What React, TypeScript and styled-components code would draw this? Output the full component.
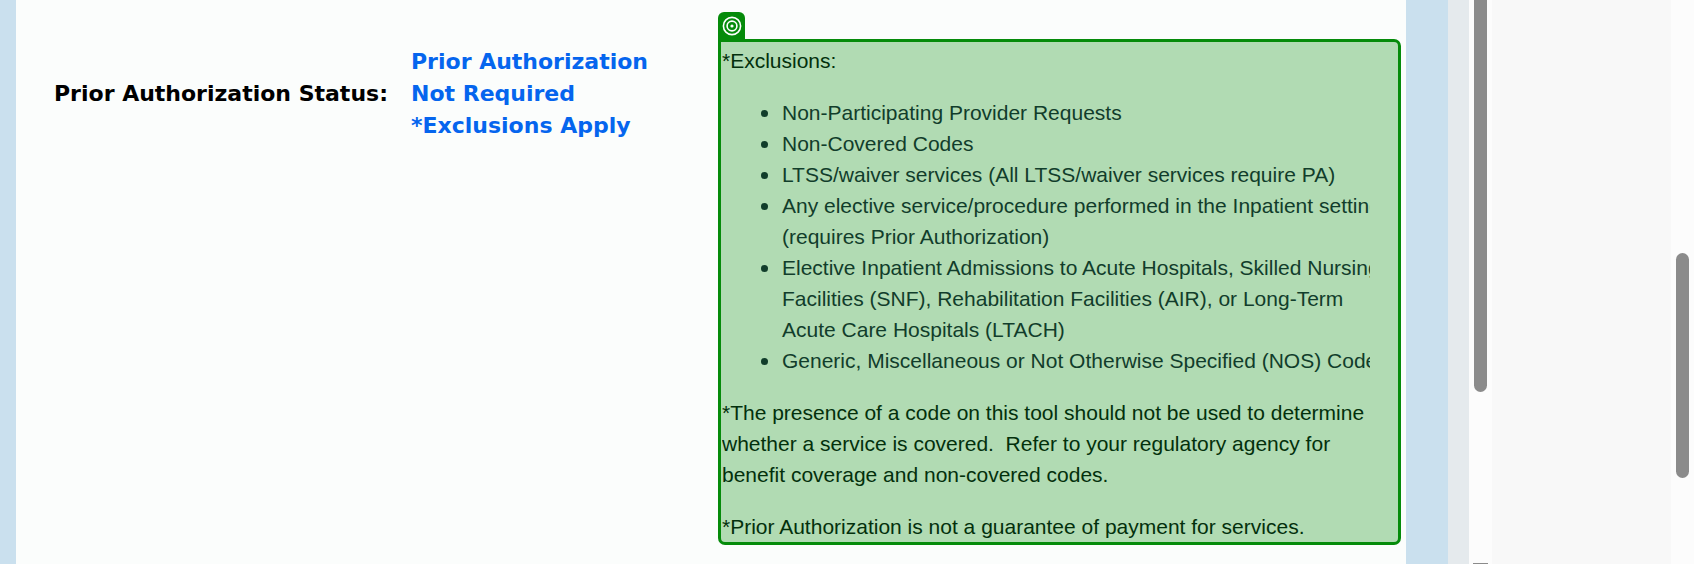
import React from "react";
import styled, { createGlobalStyle } from "styled-components";

const GlobalStyle = createGlobalStyle`
  * { box-sizing: border-box; }
  body {
    margin: 0;
    background: #f8f8f8;
    font-family: "Liberation Sans", Arial, sans-serif;
  }
`;

const Page = styled.div`
  display: flex;
  min-height: 100vh;
  overflow: hidden;
`;

const Frame = styled.main`
  flex: 1;
  min-width: 0;
  display: flex;
  background: #fbfdfc;
  border-left: 16px solid #cae0ee;
  border-right: 42px solid #cae0ee;
`;

const Gutter = styled.div`
  width: 21px;
  background: #e5eaed;
`;

const SidePanel = styled.aside`
  width: 179px;
  background: #f8f8f8;
`;

const Track = styled.div<{ $top: number }>`
  display: flex;
  flex-direction: column;
  align-items: center;
  justify-content: space-between;
  width: 23px;
  padding-top: ${(p) => p.$top}px;
  background: #fcfcfc;
`;

const Thumb = styled.div<{ $height: number; $flatTop?: boolean }>`
  width: 13px;
  height: ${(p) => p.$height}px;
  border-radius: ${(p) => (p.$flatTop ? "0 0 7px 7px" : "7px")};
  background: #8b8b8b;
`;

const ScrollArrow = styled.div`
  width: 15px;
  height: 1px;
  background: #8b8b8b;
`;

const Result = styled.section`
  flex: 1;
  min-width: 0;
  display: grid;
  grid-template-columns: 357fr 307fr 683fr;
  align-items: start;
  padding: 39px 5px 19px 38px;
`;

const StatusText = styled.div<{ $color: string }>`
  display: flex;
  align-items: center;
  height: 96px;
  margin-top: 7px;
  color: ${(p) => p.$color};
  font: bold 22px/32px Verdana, "DejaVu Sans", sans-serif;
  white-space: nowrap;
`;

const Highlight = styled.div`
  position: relative;
  min-width: 0;
  padding: 3px 28px 0 1px;
  border: 3px solid #058b0a;
  border-radius: 0 7px 7px 7px;
  background: #b1dbb3;
`;

const Badge = styled.span`
  position: absolute;
  left: -3px;
  bottom: 100%;
  display: flex;
  align-items: center;
  justify-content: center;
  width: 27px;
  height: 30px;
  padding-bottom: 3px;
  border-radius: 6px 6px 0 0;
  background: #058b0a;
`;

const Copy = styled.div`
  display: flex;
  flex-direction: column;
  gap: 21px;
  overflow: hidden;
  color: #03300c;
  font-size: 21px;
  line-height: 31px;
`;

const Paragraph = styled.p`
  margin: 0;
`;

const List = styled.ul`
  margin: 0;
  padding-left: 60px;
  color: #113d2b;
  list-style: none;
  white-space: nowrap;
`;

const Item = styled.li`
  &::before {
    content: "";
    display: inline-block;
    width: 7px;
    height: 7px;
    margin: 0 14px 0 -21px;
    border-radius: 50%;
    background: currentColor;
    vertical-align: 3px;
  }
`;

export default function App() {
  return (
    <>
      <GlobalStyle />
      <Page>
        <Frame>
          <Result>
            <StatusText $color="#000000">Prior Authorization Status:</StatusText>
            <StatusText $color="#0565ee">
              Prior Authorization
              <br />
              Not Required
              <br />
              *Exclusions Apply
            </StatusText>
            <Highlight>
              <Badge>
                <svg width="20" height="20" viewBox="0 0 20 20" fill="none" stroke="#fff" strokeWidth="1.6" aria-hidden="true">
                  <circle cx="10" cy="10" r="8.6" />
                  <circle cx="10" cy="10" r="4.9" />
                  <circle cx="10" cy="10" r="1.6" fill="#fff" stroke="none" />
                </svg>
              </Badge>
              <Copy>
                <Paragraph>*Exclusions:</Paragraph>
                <List>
                  <Item>Non-Participating Provider Requests</Item>
                  <Item>Non-Covered Codes</Item>
                  <Item>LTSS/waiver services (All LTSS/waiver services require PA)</Item>
                  <Item>
                    Any elective service/procedure performed in the Inpatient setting
                    <br />
                    (requires Prior Authorization)
                  </Item>
                  <Item>
                    Elective Inpatient Admissions to Acute Hospitals, Skilled Nursing
                    <br />
                    Facilities (SNF), Rehabilitation Facilities (AIR), or Long-Term
                    <br />
                    Acute Care Hospitals (LTACH)
                  </Item>
                  <Item>Generic, Miscellaneous or Not Otherwise Specified (NOS) Codes</Item>
                </List>
                <Paragraph>
                  *The presence of a code on this tool should not be used to determine whether a
                  service is covered.&nbsp; Refer to your regulatory agency for benefit coverage and
                  non-covered codes.
                </Paragraph>
                <Paragraph>*Prior Authorization is not a guarantee of payment for services.</Paragraph>
              </Copy>
            </Highlight>
          </Result>
        </Frame>
        <Gutter />
        <Track $top={0}>
          <Thumb $height={392} $flatTop />
          <ScrollArrow />
        </Track>
        <SidePanel />
        <Track $top={253}>
          <Thumb $height={225} />
        </Track>
      </Page>
    </>
  );
}
